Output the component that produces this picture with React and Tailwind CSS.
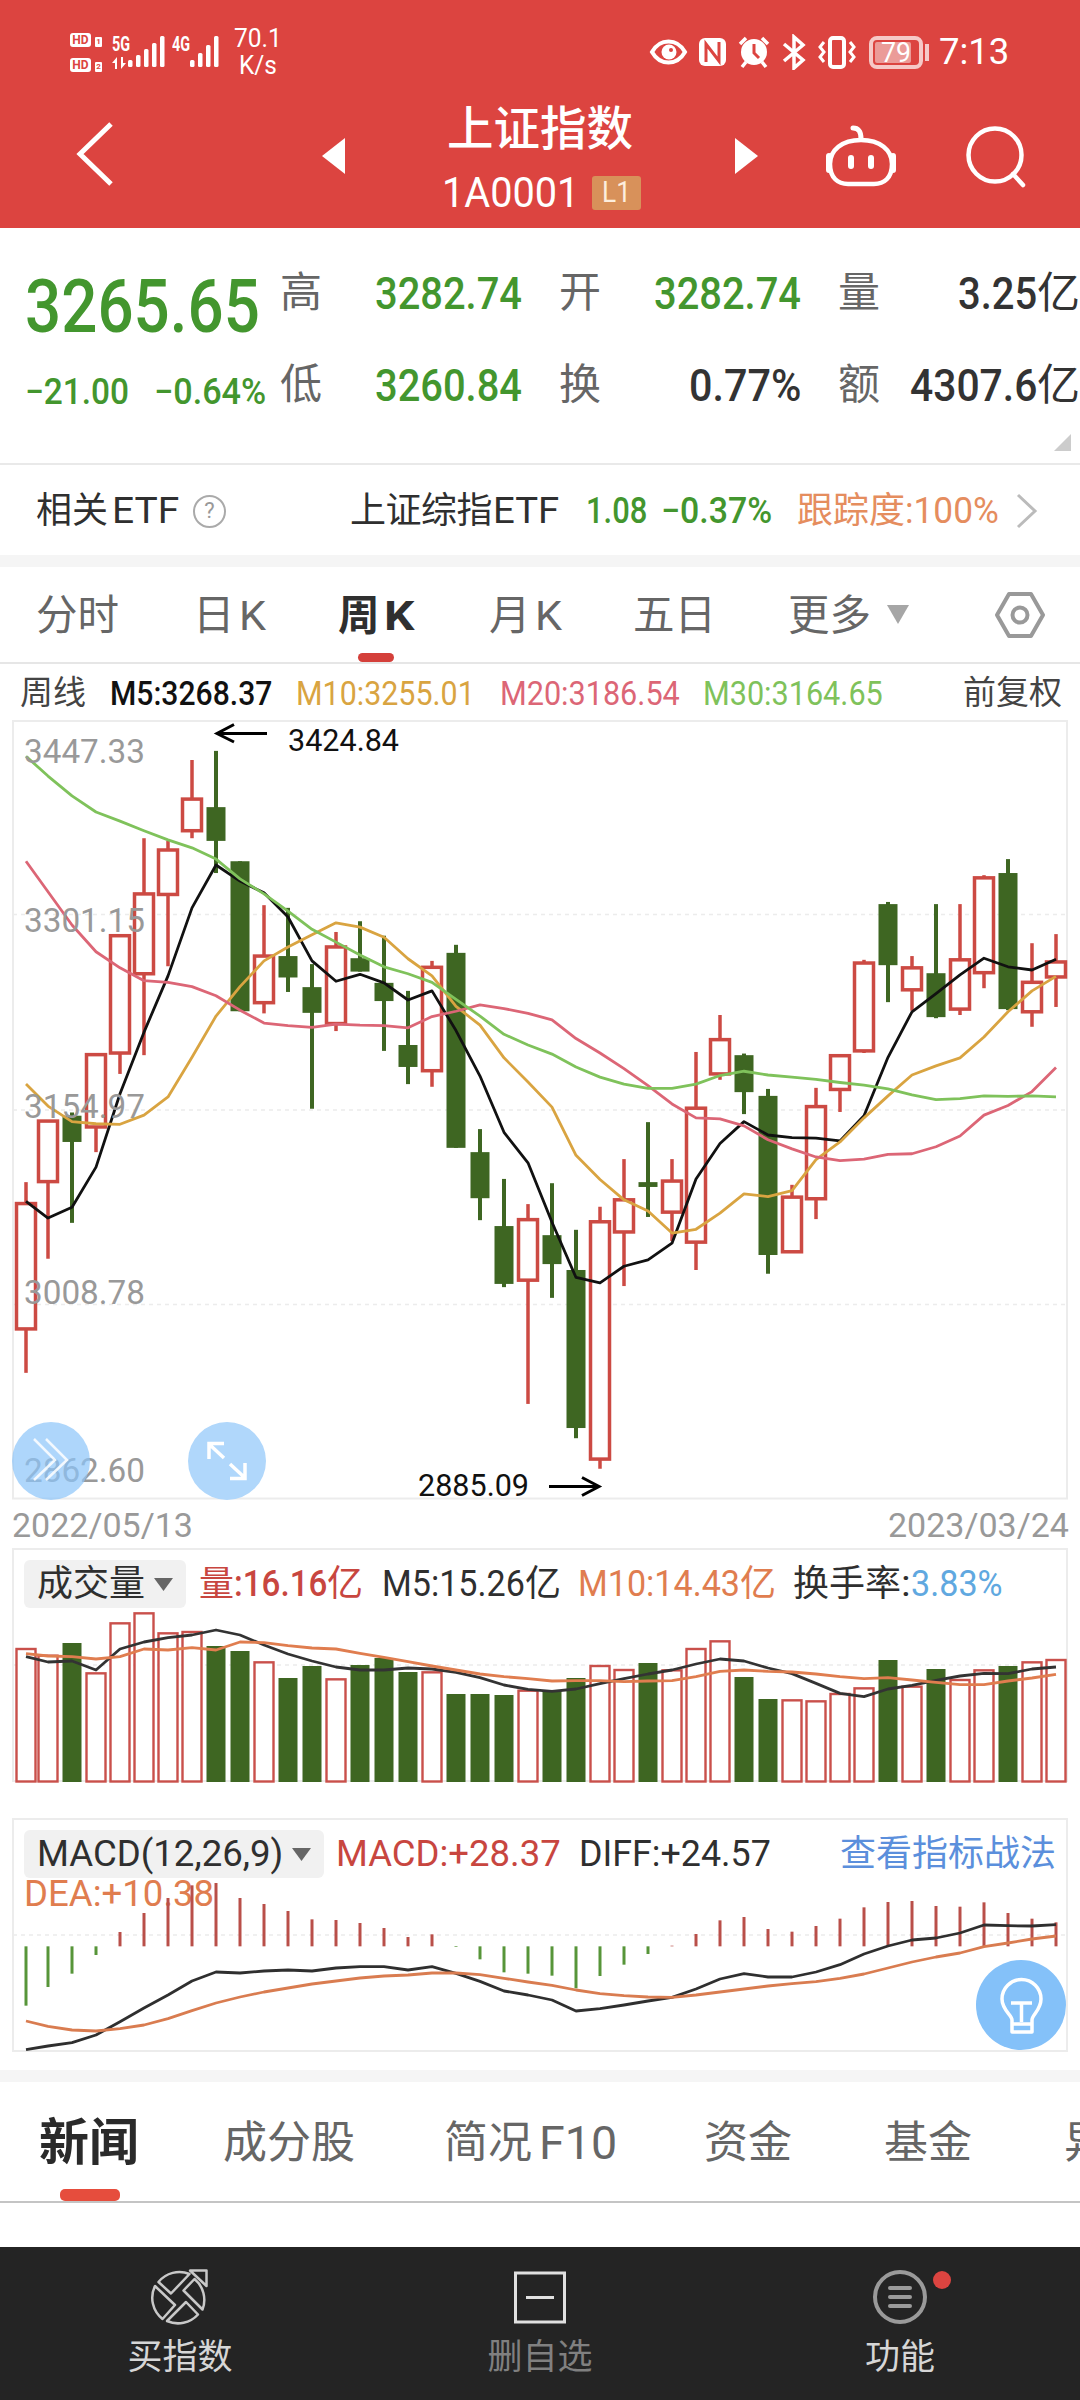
import { useLayoutEffect, useRef, useState } from 'react'

// Squeezes condensed numerals into the width they get on the device
function Fit({ w, className = '', children }) {
  const ref = useRef(null)
  const [scale, setScale] = useState(1)

  useLayoutEffect(() => {
    setScale(w / ref.current.offsetWidth)
  }, [w])

  return (
    <span className={`block shrink-0 whitespace-nowrap ${className}`} style={{ width: w }}>
      <span ref={ref} className="inline-block origin-left" style={{ transform: `scaleX(${scale})` }}>
        {children}
      </span>
    </span>
  )
}

const barX = (i) => (i === 0 ? 26 : 24 * (i + 1))

// [type, body top, body bottom, wick top, wick bottom]
const candles = [
  ['r', 940, 1174, 900, 1256], ['r', 786, 899, 786, 1043], ['g', 776, 825, 770, 976],
  ['r', 662, 797, 659, 844], ['r', 440, 659, 437, 698], ['r', 362, 511, 258, 663],
  ['r', 280, 363, 263, 497], ['r', 185, 244, 112, 258], ['g', 200, 263, 95, 323],
  ['g', 301, 581, 301, 581], ['r', 478, 565, 383, 585], ['g', 478, 518, 388, 545],
  ['g', 536, 584, 493, 763], ['r', 461, 604, 433, 618], ['g', 482, 507, 413, 507],
  ['g', 528, 562, 440, 655], ['g', 644, 685, 543, 717], ['r', 499, 692, 487, 722],
  ['g', 472, 836, 457, 836], ['g', 844, 930, 801, 971], ['g', 982, 1090, 894, 1096],
  ['r', 970, 1083, 941, 1314], ['g', 999, 1053, 902, 1116], ['g', 1064, 1359, 989, 1378],
  ['r', 974, 1417, 946, 1435], ['r', 933, 993, 857, 1094], ['g', 900, 909, 788, 965],
  ['r', 898, 956, 857, 1010], ['r', 762, 1012, 657, 1064], ['r', 634, 698, 588, 709],
  ['g', 663, 732, 660, 773], ['g', 739, 1036, 726, 1071], ['r', 928, 1030, 905, 1030],
  ['r', 759, 931, 724, 969], ['r', 664, 727, 664, 769], ['r', 491, 655, 485, 659],
  ['g', 381, 495, 377, 564], ['r', 500, 541, 478, 580], ['g', 510, 592, 381, 594],
  ['r', 485, 577, 381, 588], ['r', 332, 509, 327, 538], ['g', 323, 577, 297, 579],
  ['r', 527, 582, 454, 610], ['r', 489, 517, 437, 573],
]

const priceLines = [
  { color: '#111111', data: [936, 967, 947, 872, 735, 620, 515, 388, 308, 338, 360, 405, 487, 525, 512, 528, 560, 543, 617, 702, 807, 864, 975, 1078, 1088, 1057, 1045, 1014, 894, 828, 787, 812, 817, 818, 823, 776, 667, 582, 548, 513, 482, 498, 504, 484] },
  { color: '#d9a441', data: [717, 758, 787, 791, 792, 775, 741, 667, 590, 535, 487, 461, 438, 416, 424, 443, 483, 515, 572, 607, 668, 713, 760, 850, 895, 933, 954, 995, 988, 958, 922, 927, 916, 858, 825, 780, 739, 700, 683, 668, 629, 582, 543, 516] },
  { color: '#dc6676', data: [301, 358, 420, 470, 500, 524, 527, 535, 552, 579, 603, 608, 611, 605, 607, 608, 612, 591, 581, 569, 576, 585, 597, 632, 659, 688, 720, 754, 780, 782, 795, 821, 838, 853, 860, 857, 848, 847, 834, 814, 775, 757, 731, 686] },
  { color: '#7fc25b', data: [105, 142, 179, 209, 226, 244, 261, 276, 297, 334, 362, 394, 428, 452, 476, 498, 511, 527, 559, 590, 624, 644, 661, 685, 704, 717, 725, 725, 717, 701, 693, 700, 704, 708, 714, 719, 726, 737, 746, 744, 739, 740, 739, 741] },
]

const volumes = [
  357, 377, 339, 430, 280, 250, 310, 306, 348, 363, 397, 444, 408, 448, 405, 384, 426, 427, 492, 492, 495, 482,
  480, 444, 408, 420, 399, 421, 357, 334, 441, 507, 511, 514, 492, 475, 390, 470, 417, 450, 421, 408, 397, 390,
]

const volumeLines = [
  { color: '#333333', data: [380, 396, 393, 420, 357, 336, 323, 315, 300, 315, 345, 372, 393, 411, 420, 420, 414, 417, 427, 443, 465, 478, 484, 477, 461, 446, 432, 420, 402, 387, 393, 414, 431, 460, 490, 500, 477, 466, 451, 438, 430, 431, 417, 411] },
  { color: '#e07d4f', data: [371, 378, 380, 387, 380, 357, 360, 353, 360, 336, 338, 347, 354, 357, 370, 382, 395, 408, 420, 432, 440, 446, 453, 452, 452, 455, 453, 452, 440, 424, 420, 424, 426, 432, 440, 446, 443, 450, 457, 464, 464, 453, 444, 433] },
]

const MACD_ZERO = 439
const macdBars = [
  617, 561, 521, 465, 396, 339, 294, 256, 249, 294, 312, 333, 358, 360, 369, 384, 411, 403, 441, 478, 517, 521,
  527, 565, 528, 494, 462, 437, 402, 361, 351, 387, 395, 378, 356, 322, 306, 303, 318, 320, 307, 339, 356, 367,
]

const macdLines = [
  { color: '#2f2f2f', data: [749, 738, 728, 705, 665, 624, 585, 543, 516, 519, 513, 510, 513, 504, 500, 500, 510, 500, 520, 544, 573, 585, 600, 633, 626, 615, 603, 592, 567, 537, 521, 531, 531, 516, 494, 462, 438, 420, 414, 399, 375, 377, 378, 374] },
  { color: '#d97c50', data: [663, 679, 690, 693, 686, 675, 656, 632, 609, 591, 576, 564, 552, 543, 534, 528, 525, 519, 519, 524, 535, 546, 556, 570, 581, 587, 591, 592, 585, 576, 567, 558, 551, 545, 535, 522, 504, 486, 471, 459, 440, 429, 417, 408] },
]

const priceY = (v) => 700 + v / 1.8667
const volumeY = (v) => 1530 + v / 3
const macdY = (v) => 1800 + v / 3

function Lines({ lines, y, width = 2.8 }) {
  return lines.map(({ color, data }) => (
    <polyline
      key={color}
      points={data.map((v, i) => `${barX(i)},${y(v)}`).join(' ')}
      fill="none"
      stroke={color}
      strokeWidth={width}
      strokeLinejoin="round"
    />
  ))
}

function Frame({ top, bottom, grid }) {
  return (
    <g fill="none" stroke="#ececec" strokeWidth="2">
      <rect x="13" y={top} width="1054" height={bottom - top} />
      {grid.map((y) => (
        <line key={y} x1="13" x2="1067" y1={y} y2={y} strokeWidth="1.5" strokeDasharray="4 4" />
      ))}
    </g>
  )
}

function SignalBars({ heights }) {
  return (
    <svg width={heights.length * 8} height="32" viewBox={`0 0 ${heights.length * 8} 32`} fill="#fff">
      {heights.map((h, i) => (
        <rect key={i} x={i * 8} y={31 - h} width="4.5" height={h} rx="1.5" />
      ))}
    </svg>
  )
}

function HdBadge({ n }) {
  return (
    <div className="flex items-end gap-[4px]">
      <span className="flex h-[14px] w-[21px] items-center justify-center rounded-[3px] bg-white text-[12px] leading-none font-bold text-[#dc4440]">
        HD
      </span>
      <span className="flex h-[10px] w-[7px] items-center justify-center rounded-[1px] bg-white text-[8px] leading-none font-bold text-[#dc4440]">
        {n}
      </span>
    </div>
  )
}

function StatusBar() {
  return (
    <div className="flex h-[104px] items-center pl-[70px] text-white">
      <div className="flex w-[42px] flex-col gap-[11px]">
        <HdBadge n="1" />
        <HdBadge n="2" />
      </div>
      <div className="flex h-[34px] w-[16px] flex-col justify-between">
        <Fit w={18} className="text-[20px] leading-[18px] font-bold">5G</Fit>
        <svg width="16" height="12" viewBox="0 0 16 12" fill="#fff">
          <path d="M5 12V0L0 6h3v6zM9 0v12l5-6h-3V0z" />
        </svg>
      </div>
      <SignalBars heights={[7, 12, 18, 24, 31]} />
      <div className="ml-[4px] h-[34px] w-[18px]">
        <Fit w={18} className="text-[20px] leading-[18px] font-bold">4G</Fit>
      </div>
      <SignalBars heights={[7, 14, 22, 31]} />
      <div className="ml-[12px] flex flex-col items-center">
        <Fit w={48} className="text-[25px] leading-[27px]">70.1</Fit>
        <Fit w={38} className="text-[25px] leading-[27px]">K/s</Fit>
      </div>
      <svg className="ml-[366px]" width="282" height="36" viewBox="648 34 282 36" fill="none" stroke="#fff" strokeWidth="4">
        <path d="M652 52c4-7 10-10.500 16.500-10.500S681 45 685 52c-4 7-10 10.500-16.500 10.500S656 59 652 52z" />
        <circle cx="669" cy="52" r="7.500" fill="#fff" stroke="none" />
        <circle cx="671" cy="50" r="2" fill="#dc4440" stroke="none" />
        {/* NFC */}
        <rect x="699" y="38" width="27" height="28" rx="6" fill="#fff" stroke="none" />
        <path d="M706 62V44l13 17V42" stroke="#dc4440" strokeWidth="3" />
        {/* alarm */}
        <circle cx="754" cy="52" r="13" fill="#fff" stroke="none" />
        <path d="M740 44l6-6M768 44l-6-6M746 62l-4 5M762 62l4 5" strokeWidth="3.500" />
        <path d="M754 44v9l5 5" stroke="#dc4440" strokeWidth="3" />
        {/* bluetooth */}
        <path d="M784 44l19 16-9 8V37l9 8-19 16" strokeWidth="3.500" />
        {/* vibrate */}
        <rect x="830" y="38" width="14" height="29" rx="3" />
        <path d="M824 42l-4 5 4 5-4 5 4 5M850 42l4 5-4 5 4 5-4 5" strokeWidth="3" />
        {/* battery */}
        <rect x="871" y="38" width="50" height="29" rx="6" stroke="#f6c9c7" />
        <rect x="875" y="42" width="36" height="21" rx="2" fill="#eb9b98" stroke="none" />
        <path d="M927 44v17" stroke="#f6c9c7" />
        <text x="881" y="62" fill="#fff" stroke="none" fontSize="27" textLength="30" lengthAdjust="spacingAndGlyphs">79</text>
      </svg>
      <Fit w={70} className="ml-[9px] text-[37px] leading-[38px]">7:13</Fit>
    </div>
  )
}

function Header() {
  return (
    <div className="flex h-[124px] items-start pl-[72px]">
      <div className="flex h-[100px] items-center">
        <svg width="44" height="68" viewBox="0 0 44 68" fill="none" stroke="#fff" strokeWidth="5">
          <path d="M39 4L8 34l31 30" />
        </svg>
        <svg className="mt-[4px] ml-[206px]" width="23" height="36" viewBox="0 0 23 36" fill="#fff">
          <path d="M23 0v36L0 18z" />
        </svg>
      </div>
      <div className="flex w-[390px] flex-col items-center text-white">
        <div className="flex h-[48px] items-center pt-[3px] text-[46.500px] leading-none font-medium">上证指数</div>
        <div className="flex h-[76px] items-center gap-[13px] pt-[5px] pl-[2px]">
          <Fit w={137} className="text-[42px] leading-none">1A0001</Fit>
          <div className="flex h-[34px] w-[49px] items-center justify-center rounded-[3px] bg-[#d8915a]">
            <Fit w={29} className="text-[29px] leading-none text-[#fdeedd]">L1</Fit>
          </div>
        </div>
      </div>
      <div className="flex h-[100px] items-center">
        <svg className="mt-[4px]" width="23" height="36" viewBox="0 0 23 36" fill="#fff">
          <path d="M0 0v36l23-18z" />
        </svg>
        <svg className="mt-[2px] ml-[67px]" width="72" height="68" viewBox="825 120 72 68" fill="none" stroke="#fff" strokeWidth="4.500" strokeLinecap="round">
          <path d="M861 138c0-7-2-11-8-11" strokeWidth="5" />
          <path d="M861 139c19 0 31 10 31 24s-8 20-18 20h-26c-10 0-18-6-18-20s12-24 31-24z" />
          <path d="M829 155v14M893 155v14M851 157v8M871 157v8" strokeWidth="6" />
        </svg>
        <svg className="mt-[2px] ml-[67px]" width="64" height="66" viewBox="0 0 64 66" fill="none" stroke="#fff" strokeWidth="4.500">
          <circle cx="31" cy="33" r="26.500" />
          <path d="M49 52l10 11" strokeLinecap="round" />
        </svg>
      </div>
    </div>
  )
}

function Stat({ label, w, tone = 'text-[#333]', unit, children }) {
  return (
    <div className="flex h-[92px] items-center justify-between">
      <span className="text-[42px] leading-none text-[#666]">{label}</span>
      <span className={`flex items-center font-medium ${tone}`}>
        <Fit w={w} className="text-[45px] leading-none">{children}</Fit>
        {unit && <span className="text-[43px] leading-none font-normal">{unit}</span>}
      </span>
    </div>
  )
}

function Quote() {
  return (
    <section className="flex h-[237px] flex-col border-b-2 border-[#e9e9e9] pt-[19px] pl-[25px]">
      <div className="flex">
        <div className="w-[255px] text-[#43962e]">
          <div className="flex h-[92px] items-center pt-[27px]">
            <Fit w={235} className="text-[74px] leading-none font-medium">3265.65</Fit>
          </div>
          <div className="flex h-[92px] items-center gap-[25px] pt-[13px] text-[36px] leading-none font-medium">
            <Fit w={104}>−21.00</Fit>
            <Fit w={112}>−0.64%</Fit>
          </div>
        </div>
        <div className="grid flex-1 grid-cols-3 gap-x-[37px]">
          <Stat label="高" w={147} tone="text-[#43962e]">3282.74</Stat>
          <Stat label="开" w={147} tone="text-[#43962e]">3282.74</Stat>
          <Stat label="量" w={79} unit="亿">3.25</Stat>
          <Stat label="低" w={147} tone="text-[#43962e]">3260.84</Stat>
          <Stat label="换" w={112}>0.77%</Stat>
          <Stat label="额" w={127} unit="亿">4307.6</Stat>
        </div>
      </div>
      <div className="flex justify-end pt-[3px] pr-[9px]">
        <svg width="17" height="17" viewBox="0 0 17 17" fill="#ccc">
          <path d="M17 0v17H0z" />
        </svg>
      </div>
    </section>
  )
}

function EtfRow() {
  return (
    <div className="flex h-[90px] items-center pt-[2px] pl-[36px] text-[36px] leading-none text-[#2f2f2f]">
      <span>相关</span>
      <Fit w={67} className="ml-[4px]">ETF</Fit>
      <span className="ml-[14px] flex size-[33px] items-center justify-center rounded-full border-2 border-[#aaa] text-[22px] leading-none text-[#999]">
        ?
      </span>
      <span className="ml-[124px] tracking-[-0.500px]">上证综指</span>
      <Fit w={66} className="ml-px">ETF</Fit>
      <Fit w={61} className="ml-[27px] font-medium text-[#43962e]">1.08</Fit>
      <Fit w={111} className="ml-[14px] font-medium text-[#43962e]">−0.37%</Fit>
      <span className="ml-[25px] text-[#e58d5e]">跟踪度</span>
      <Fit w={94} className="text-[#e58d5e]">:100%</Fit>
      <svg className="ml-[17px]" width="22" height="36" viewBox="0 0 22 36" fill="none" stroke="#bbb" strokeWidth="3">
        <path d="M2 2l17 16L2 34" />
      </svg>
    </div>
  )
}

const periods = [
  { label: '分时', box: 'ml-[36px] w-[82px]' },
  { label: '日', k: true, box: 'ml-[75px] w-[75px]' },
  { label: '周', k: true, active: true, box: 'ml-[70px] w-[78px]' },
  { label: '月', k: true, box: 'ml-[73px] w-[75px]' },
  { label: '五日', box: 'ml-[69px] w-[82px]' },
  { label: '更多', box: 'ml-[73px] w-[84px]' },
]

function PeriodTabs() {
  return (
    <div className="flex h-[97px] items-center border-b-2 border-[#e6e6e6] text-[41.500px] leading-none text-[#666]">
      {periods.map(({ label, k, active, box }) => (
        <div key={label} className={`relative flex h-full items-center pt-[2px] whitespace-nowrap ${box} ${active ? 'font-bold text-[#2f2f2f]' : ''}`}>
          {label}
          {k && <Fit w={active ? 30 : 27} className="ml-[4px]">K</Fit>}
          {active && <span className="absolute bottom-0 left-[20px] h-[9px] w-[36px] rounded-full bg-[#d43f3a]" />}
        </div>
      ))}
      <svg className="ml-[14px]" width="24" height="19" viewBox="0 0 24 19" fill="#a6a6a6">
        <path d="M1 0h22L12 19z" />
      </svg>
      <svg className="ml-[85px]" width="50" height="48" viewBox="0 0 50 48" fill="none" stroke="#999" strokeWidth="4" strokeLinejoin="round">
        <path d="M14 3h22l12 21-12 21H14L2 24z" />
        <circle cx="25" cy="24" r="7.500" />
      </svg>
    </div>
  )
}

function PriceChart() {
  return (
    <>
      <div className="flex h-[51px] items-center pt-[6px] pl-[20px] text-[34px] leading-none font-medium">
        <span className="text-[33px] font-normal text-[#444]">周线</span>
        <Fit w={162} className="ml-[24px] text-[#111]">M5:3268.37</Fit>
        <Fit w={179} className="ml-[24px] font-normal text-[#d9a441]">M10:3255.01</Fit>
        <Fit w={180} className="ml-[25px] font-normal text-[#dc6676]">M20:3186.54</Fit>
        <Fit w={180} className="ml-[23px] font-normal text-[#7fc25b]">M30:3164.65</Fit>
        <span className="ml-[80px] text-[33px] font-normal text-[#444]">前复权</span>
      </div>
      <svg className="block" width="1080" height="790" viewBox="0 715 1080 790">
        <Frame top={721} bottom={1498.5} grid={[914.5, 1110, 1304.5]} />
        {candles.map(([type, top, bottom, high, low], i) => {
          const x = barX(i)
          if (type === 'g') {
            return (
              <g key={i} fill="#3e6622">
                <rect x={x - 2} y={priceY(high)} width="4" height={priceY(low) - priceY(high)} />
                <rect x={x - 9.5} y={priceY(top)} width="19" height={priceY(bottom) - priceY(top)} />
              </g>
            )
          }
          return (
            <g key={i} stroke="#cc4a43" strokeWidth="3.500" fill="#fff">
              <path d={`M${x} ${priceY(high)}V${priceY(low)}`} />
              <rect x={x - 9.5} y={priceY(top)} width="19" height={priceY(bottom) - priceY(top)} />
            </g>
          )
        })}
        <Lines lines={priceLines} y={priceY} />
        <g fill="#999" fontSize="34">
          <text x="24" y="763" textLength="121" lengthAdjust="spacingAndGlyphs">3447.33</text>
          <text x="24" y="932" textLength="121" lengthAdjust="spacingAndGlyphs">3301.15</text>
          <text x="24" y="1118" textLength="121" lengthAdjust="spacingAndGlyphs">3154.97</text>
          <text x="24" y="1304" textLength="121" lengthAdjust="spacingAndGlyphs">3008.78</text>
          <text x="24" y="1482" textLength="121" lengthAdjust="spacingAndGlyphs">2862.60</text>
        </g>
        <g fill="#111" fontSize="31">
          <text x="288" y="751" textLength="111" lengthAdjust="spacingAndGlyphs">3424.84</text>
          <text x="418" y="1496" textLength="111" lengthAdjust="spacingAndGlyphs">2885.09</text>
        </g>
        <g fill="none" stroke="#000" strokeWidth="3">
          <path d="M267 733.500h-50M234 724.500l-17 9 17 8.500" />
          <path d="M549 1486.500h50M582 1477.500l17 9-17 9" />
        </g>
        <circle cx="51" cy="1461" r="39" fill="#8cc4f9" fillOpacity="0.700" />
        <circle cx="227" cy="1461" r="39" fill="#b0d7fb" />
        <g fill="none" stroke="#fff" strokeWidth="2.500">
          <path d="M34 1439l21 21-21 20M46 1439l21 21-21 20" strokeOpacity="0.850" />
          <path d="M224 1443.500h-15V1459M210 1445l14 13M230 1478.500h15V1463M244 1477l-14-13" strokeWidth="3.500" />
        </g>
      </svg>
      <div className="flex h-[40px] items-center justify-between pr-[11px] pl-[12px] text-[34px] leading-none text-[#999]">
        <Fit w={181}>2022/05/13</Fit>
        <Fit w={181}>2023/03/24</Fit>
      </div>
    </>
  )
}

function Picker({ children }) {
  return (
    <div className="flex h-[48px] items-center gap-[9px] rounded-[6px] bg-[#f1f1f1] px-[13px] text-[#2f2f2f]">
      {children}
      <svg width="19" height="13" viewBox="0 0 19 13" fill="#666">
        <path d="M0 0h19L9.500 13z" />
      </svg>
    </div>
  )
}

function VolumeChart() {
  return (
    <div className="relative h-[270px] pt-[15px] pl-[24px]">
      <svg className="absolute inset-0" width="1080" height="270" viewBox="0 1545 1080 270">
        <Frame top={1549} bottom={1781} grid={[1665]} />
        {volumes.map((v, i) => {
          const x = barX(i)
          const y = volumeY(v)
          return candles[i][0] === 'g' ? (
            <rect key={i} x={x - 9.5} y={y} width="19" height={1782 - y} fill="#3e6622" />
          ) : (
            <rect key={i} x={x - 9.5} y={y} width="19" height={1781.5 - y} fill="#fff" stroke="#c9504b" strokeWidth="2.4" />
          )
        })}
        <Lines lines={volumeLines} y={volumeY} />
      </svg>
      <div className="relative flex h-[48px] items-center text-[36px] leading-none">
        <Picker>成交量</Picker>
        <span className="ml-[13px] flex items-center text-[#c8463f]">
          <span className="text-[35px]">量</span>
          <Fit w={93} className="font-medium">:16.16</Fit>
          <span>亿</span>
        </span>
        <span className="ml-[19px] flex items-center text-[#2f2f2f]">
          <Fit w={143}>M5:15.26</Fit>
          <span>亿</span>
        </span>
        <span className="ml-[17px] flex items-center text-[#e07d4f]">
          <Fit w={162}>M10:14.43</Fit>
          <span>亿</span>
        </span>
        <span className="ml-[17px] flex items-center text-[#2f2f2f]">
          换手率
          <Fit w={10}>:</Fit>
        </span>
        <Fit w={92} className="text-[#60a8e0]">3.83%</Fit>
      </div>
    </div>
  )
}

function MacdChart() {
  return (
    <div className="relative h-[255px] pt-[15px] pl-[24px]">
      <div className="flex h-[48px] items-center text-[36px] leading-none">
        <Picker><Fit w={246}>MACD(12,26,9)</Fit></Picker>
        <Fit w={225} className="ml-[12px] text-[#c8463f]">MACD:+28.37</Fit>
        <Fit w={192} className="ml-[18px] text-[#2f2f2f]">DIFF:+24.57</Fit>
        <span className="ml-[69px] text-[#5b8fdc]">查看指标战法</span>
      </div>
      <Fit w={190} className="text-[36px] leading-[32px] text-[#e07d4f]">DEA:+10.38</Fit>
      <svg className="absolute inset-0" width="1080" height="255" viewBox="0 1815 1080 255">
        <Frame top={1819} bottom={2051} grid={[1935]} />
        {macdBars.map((v, i) => (
          <path
            key={i}
            d={`M${barX(i)} ${macdY(MACD_ZERO)}V${macdY(v)}`}
            stroke={v > MACD_ZERO ? '#579539' : '#b94f49'}
            strokeWidth="3"
          />
        ))}
        <Lines lines={macdLines} y={macdY} />
        <circle cx="1021" cy="2005" r="45" fill="#84c1f9" />
        <g fill="none" stroke="#fff" strokeWidth="3.500" strokeLinejoin="round">
          <path d="M1012 2032v-12c0-5-10-10-10-21a19.500 19.500 0 0 1 39 0c0 11-9 16-9 21v12z" />
          <path d="M1011 2003h21M1021.500 2003v19M1012 2024h19" />
        </g>
      </svg>
    </div>
  )
}

function InfoTabs() {
  return (
    <div className="flex h-[121px] items-center overflow-hidden border-b-2 border-[#c4c4c4] text-[44px] leading-none whitespace-nowrap text-[#666]">
      <div className="relative ml-[39px] flex h-full w-[101px] items-center pt-[3px] text-[50px] font-bold text-[#2a2a2a]">
        新闻
        <span className="absolute bottom-0 left-[21px] h-[12px] w-[60px] rounded-[5px] bg-[#e64d3d]" />
      </div>
      <div className="flex shrink-0 items-center pt-[2px]">
        <span className="ml-[84px]">成分股</span>
        <span className="ml-[89px] flex items-center">
          简况
          <Fit w={78} className="ml-[7px] text-[46px]">F10</Fit>
        </span>
        <span className="ml-[87px]">资金</span>
        <span className="ml-[92px]">基金</span>
        <span className="ml-[92px]">异动</span>
      </div>
    </div>
  )
}

function BottomNav() {
  return (
    <nav className="grid h-[153px] grid-cols-3 bg-[#242424] text-[35px] leading-none text-[#d6d6d6]">
      <div className="flex flex-col items-center pt-[18px]">
        <svg width="64" height="66" viewBox="0 0 64 66" fill="none" stroke="#c8c8c8" strokeWidth="2.500" strokeLinejoin="round">
          <path d="M10.500 17a27 27 0 0 1 31-8L23 28.500z" />
          <path d="M7 21a27 27 0 0 0 7.500 33L27 40z" />
          <path d="M46.500 14L35.500 25.500l19 19a27 27 0 0 0-8-30.500z" />
          <path d="M19 56a27 27 0 0 0 31-6.500L38 37z" />
          <path d="M42 5.500h16.500V21z" />
        </svg>
        <span className="mt-[9px]">买指数</span>
      </div>
      <div className="flex flex-col items-center pt-[18px] text-[#808080]">
        <svg width="64" height="66" viewBox="0 0 64 66" fill="none" stroke="#e0e0e0" strokeWidth="3">
          <path d="M7.500 8h49v49h-49zM18 32.500h28" />
        </svg>
        <span className="mt-[9px]">删自选</span>
      </div>
      <div className="flex flex-col items-center pt-[18px]">
        <svg className="overflow-visible" width="64" height="66" viewBox="0 0 64 66" fill="none" stroke="#9a9a9a" strokeWidth="4">
          <circle cx="32" cy="32" r="25" />
          <path d="M22 23h20M22 32h20M22 41h20" strokeLinecap="round" />
          <circle cx="74" cy="15" r="9" fill="#dc4440" stroke="none" />
        </svg>
        <span className="mt-[9px]">功能</span>
      </div>
    </nav>
  )
}

export default function App() {
  return (
    <div className="flex h-[2400px] w-[1080px] flex-col overflow-hidden bg-white font-['Roboto','Noto_Sans_CJK_SC',sans-serif]">
      <header className="h-[228px] shrink-0 bg-[#dc4440]">
        <StatusBar />
        <Header />
      </header>
      <Quote />
      <EtfRow />
      <div className="h-[12px] bg-[#f5f5f5]" />
      <PeriodTabs />
      <PriceChart />
      <VolumeChart />
      <MacdChart />
      <div className="h-[12px] bg-[#f5f5f5]" />
      <InfoTabs />
      <div className="flex-1" />
      <BottomNav />
    </div>
  )
}
